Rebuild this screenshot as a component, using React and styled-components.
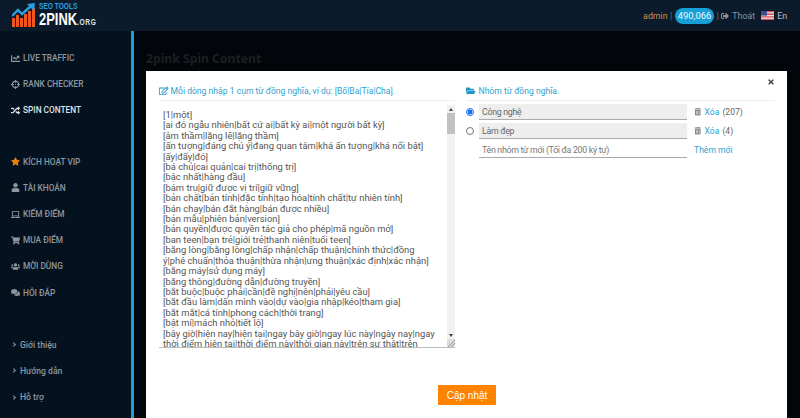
import React from 'react'
import styled, { createGlobalStyle } from 'styled-components'
import {
  FaChartLine, FaCrosshairs, FaRandom, FaStar, FaUser, FaLaptop, FaShoppingCart,
  FaUsers, FaComments, FaAngleRight, FaSignOutAlt, FaTrashAlt, FaFolderOpen, FaRegEdit, FaTimes
} from 'react-icons/fa'

const GlobalStyle = createGlobalStyle`
  html, body { margin: 0; padding: 0; height: 100%; overflow: hidden; background: #02050a; }
  body { font-family: Roboto, "Noto Sans", sans-serif; }
`;
const Page = styled.div`
  display: flex;
  flex-direction: column;
  height: 100vh;
`;
const Header = styled.header`
  flex: 0 0 31px;
  display: flex;
  align-items: center;
  justify-content: space-between;
  padding: 0 13px 0 12px;
  background: #0b1b2c;
`;
const Logo = styled.div`
  display: flex;
  align-items: center;
  gap: 3px;
`;
const LogoText = styled.div`
  display: flex;
  flex-direction: column;
  padding-top: 1px;
  font-family: "Liberation Sans", sans-serif;
  font-weight: 700;
`;
const LogoTop = styled.span`
  color: #2aa0e0;
  font-size: 9.7px;
  line-height: 10px;
  white-space: nowrap;
  transform: scaleX(0.68);
  transform-origin: left;
`;
const LogoBottom = styled.span`
  color: #fff;
  font-size: 16.6px;
  line-height: 17px;
  white-space: nowrap;
  transform: scaleX(0.78);
  transform-origin: left;
  small { font-size: 8.5px; letter-spacing: 0.8px; color: #dfe5ea; }
`;
const UserBar = styled.div`
  display: flex;
  align-items: center;
  font-size: 8.8px;
  color: #8d959c;
`;
const UserName = styled.span`
  color: #c8914a;
`;
const Sep = styled.span`
  margin: 0 2.5px;
  color: #707880;
`;
const Balance = styled.span`
  background: #17a0d8;
  color: #eaf7fc;
  border-radius: 8px;
  padding: 0 3px;
  height: 16px;
  line-height: 16px;
  font-size: 9.4px;
`;
const LogoutIcon = styled(FaSignOutAlt)`
  font-size: 8px;
  margin: 0 3px 0 0;
`;
const Flag = styled.svg`
  width: 13px;
  height: 9px;
  margin: 0 3px 0 6px;
`;
const Lang = styled.span`
  color: #b9c0c6;
`;
const Body = styled.div`
  flex: 1;
  display: flex;
  min-height: 0;
`;
const Sidebar = styled.nav`
  flex: 0 0 131px;
  background: #04121f;
  border-right: 3px solid #17a0d8;
  display: flex;
  flex-direction: column;
  padding-top: 14px;
  box-sizing: content-box;
`;
const NavGroup = styled.div`
  display: flex;
  flex-direction: column;
  margin-top: ${(props) => props.top || 0}px;
`;
const NavItem = styled.div`
  height: 26.2px;
  display: flex;
  align-items: center;
  gap: 3px;
  padding-left: 11px;
  font-size: 8.3px;
  font-weight: 500;
  color: ${(props) => props.active ? '#dfe3e6' : '#8f979e'};
  svg { font-size: 9px; color: ${(props) => props.iconColor || 'inherit'}; flex: none; }
`;
const SubItem = styled(NavItem)`
  gap: 2px;
  font-size: 8.6px;
  svg { font-size: 7px; }
`;
const Main = styled.main`
  flex: 1;
  min-width: 0;
  display: flex;
  flex-direction: column;
  padding: 19px 13px 0 12px;
`;
const Title = styled.h1`
  margin: 0;
  height: 21px;
  line-height: 18px;
  font-family: "Noto Sans", sans-serif;
  font-size: 12.2px;
  font-weight: 700;
  color: #1d1f20;
`;
const Modal = styled.section`
  flex: 1;
  background: #fff;
  display: flex;
  flex-direction: column;
  padding: 10px 12px 0 13px;
  position: relative;
`;
const CloseBtn = styled(FaTimes)`
  position: absolute;
  top: 7px;
  right: 12px;
  font-size: 8px;
  color: #444;
`;
const Columns = styled.div`
  display: flex;
  gap: 11px;
`;
const LeftCol = styled.div`
  flex: 0 0 296px;
`;
const RightCol = styled.div`
  flex: 1;
`;
const ColHead = styled.div`
  height: 19px;
  display: flex;
  align-items: center;
  gap: ${(props) => props.gap || 2}px;
  border-bottom: 1px solid #eee;
  font-size: 8.6px;
  color: #2f9fd0;
  svg { font-size: 9.5px; color: #1c93c8; }
`;
const SpinnerBox = styled.div`
  position: relative;
  margin-top: 4px;
  height: 243px;
`;
const Spinner = styled.textarea`
  display: block;
  width: 100%;
  height: 100%;
  padding: 5px 18px 0 4px;
  box-sizing: border-box;
  border: none;
  border-bottom: 1px solid #bbb;
  outline: none;
  resize: none;
  overflow: hidden;
  font-family: Roboto, "Noto Sans", sans-serif;
  font-size: 9.4px;
  line-height: 10.4px;
  color: #555;
`;
const ScrollTrack = styled.div`
  position: absolute;
  top: 0;
  right: 0;
  bottom: 1px;
  width: 8px;
  display: flex;
  flex-direction: column;
  align-items: center;
  background: #f1f1f1;
`;
const ScrollArrow = styled.div`
  flex: 0 0 8px;
  width: 8px;
  display: flex;
  align-items: center;
  justify-content: center;
  &::before {
    content: "";
    border-left: 2.5px solid transparent;
    border-right: 2.5px solid transparent;
    border-${(props) => props.down ? 'top' : 'bottom'}: 3px solid #444;
  }
`;
const ScrollThumb = styled.div`
  flex: 0 0 21px;
  width: 8px;
  background: #c1c1c1;
`;
const ScrollGap = styled.div`
  flex: 1;
`;
const ScrollCorner = styled.svg`
  flex: 0 0 8px;
  width: 8px;
  background: #dcdcdc;
`;
const Groups = styled.div`
  display: flex;
  flex-direction: column;
  gap: 4px;
  margin-top: 3px;
`;
const GroupRow = styled.div`
  display: grid;
  grid-template-columns: 13px 208px auto;
  align-items: center;
  height: 15px;
`;
const Radio = styled.input`
  width: 8px;
  height: 8px;
  margin: 0;
  accent-color: #1a6cf0;
`;
const GroupInput = styled.input`
  box-sizing: border-box;
  width: 100%;
  height: 16px;
  padding: 0 3px;
  border: none;
  border-bottom: 1px solid #aaa;
  outline: none;
  background: ${(props) => props.readOnly ? '#eee' : '#fff'};
  font-family: inherit;
  font-size: 8.8px;
  letter-spacing: -0.3px;
  color: #666;
  &::placeholder { color: #777; opacity: 1; }
`;
const GroupActions = styled.div`
  display: flex;
  align-items: center;
  gap: 3px;
  margin-left: 7px;
  font-size: 8.6px;
  color: #666;
  svg { font-size: 7.5px; color: #888; }
`;
const LinkText = styled.span`
  color: #2f9fd0;
`;
const Footer = styled.div`
  display: flex;
  justify-content: center;
  padding-top: 37px;
`;
const SaveBtn = styled.button`
  width: 58px;
  height: 20px;
  padding: 0;
  border: none;
  background: #ff8300;
  color: #fff;
  font-family: "Liberation Sans", sans-serif;
  font-size: 10px;
`;

const SYNONYMS = `[1|một]
[ai đó ngẫu nhiên|bất cứ ai|bất kỳ ai|một người bất kỳ]
[âm thầm|lặng lẽ|lặng thầm]
[ấn tượng|đáng chú ý|đang quan tâm|khá ấn tượng|khá nổi bật]
[ấy|đấy|đó]
[bá chủ|cai quản|cai trị|thống trị]
[bậc nhất|hàng đầu]
[bám trụ|giữ được vị trí|giữ vững]
[bản chất|bản tính|đặc tính|tạo hóa|tính chất|tự nhiên tính]
[bán chạy|bán đắt hàng|bán được nhiều]
[bản mẫu|phiên bản|version]
[bản quyền|được quyền tác giả cho phép|mã nguồn mở]
[ban teen|bạn trẻ|giới trẻ|thanh niên|tuổi teen]
[bằng lòng|bằng lòng|chấp nhận|chấp thuận|chính thức|đồng ý|phê chuẩn|thỏa thuận|thừa nhận|ưng thuận|xác định|xác nhận]
[bằng máy|sử dụng máy]
[băng thông|đường dẫn|đường truyền]
[bắt buộc|buộc phải|cần|đề nghị|nên|phải|yêu cầu]
[bắt đầu làm|dấn mình vào|dự vào|gia nhập|kéo|tham gia]
[bắt mắt|cá tính|phong cách|thời trang]
[bật mí|mách nhỏ|tiết lộ]
[bây giờ|hiện nay|hiện tại|ngay bây giờ|ngay lúc này|ngày nay|ngay thời điểm hiện tại|thời điểm này|thời gian này|trên sự thật|trên thực tế]`;

const mainNav = [
  { icon: <FaChartLine />, label: 'LIVE TRAFFIC' },
  { icon: <FaCrosshairs />, label: 'RANK CHECKER' },
  { icon: <FaRandom />, label: 'SPIN CONTENT', active: true },
];
const accountNav = [
  { icon: <FaStar />, label: 'KÍCH HOẠT VIP', iconColor: '#e5820f' },
  { icon: <FaUser />, label: 'TÀI KHOẢN' },
  { icon: <FaLaptop />, label: 'KIẾM ĐIỂM' },
  { icon: <FaShoppingCart />, label: 'MUA ĐIỂM' },
  { icon: <FaUsers />, label: 'MỜI DÙNG' },
  { icon: <FaComments />, label: 'HỎI ĐÁP' },
];
const helpNav = ['Giới thiệu', 'Hướng dẫn', 'Hỗ trợ'];

const LogoMark = () => (
  <svg width="24" height="25" viewBox="0 0 24 25">
    <rect x="0" y="15" width="3" height="9" fill="#f0561e" />
    <rect x="4" y="12" width="3" height="12" fill="#f0561e" />
    <rect x="8" y="15" width="3" height="9" fill="#f0561e" />
    <rect x="12" y="11" width="3" height="13" fill="#f0561e" />
    <rect x="16" y="8" width="3" height="16" fill="#f0561e" />
    <rect x="20" y="5" width="3" height="19" fill="#f0561e" />
    <path d="M0 13 L6 7 L10 11 L19 3" fill="none" stroke="#2a9fe0" strokeWidth="2.4" />
    <path d="M15 1 L23 0 L22 8 Z" fill="#2a9fe0" />
  </svg>
);

const UsFlag = () => (
  <Flag viewBox="0 0 13 9">
    <rect width="13" height="9" fill="#e9dfe3" />
    <path d="M0 0h13v1.3H0zM0 2.6h13v1.3H0zM0 5.2h13v1.3H0zM0 7.8h13V9H0z" fill="#d5525d" />
    <rect width="6" height="4.6" fill="#3d4b8c" />
  </Flag>
);

function App() {
  return (
    <Page>
      <GlobalStyle />
      <Header>
        <Logo>
          <LogoMark />
          <LogoText>
            <LogoTop>SEO TOOLS</LogoTop>
            <LogoBottom>2PINK<small>.ORG</small></LogoBottom>
          </LogoText>
        </Logo>
        <UserBar>
          <UserName>admin</UserName>
          <Sep>|</Sep>
          <Balance>490,066</Balance>
          <Sep>|</Sep>
          <LogoutIcon />
          Thoát
          <UsFlag />
          <Lang>En</Lang>
        </UserBar>
      </Header>
      <Body>
        <Sidebar>
          <NavGroup>
            {mainNav.map((item) => (
              <NavItem key={item.label} active={item.active}>{item.icon}{item.label}</NavItem>
            ))}
          </NavGroup>
          <NavGroup top={25}>
            {accountNav.map((item) => (
              <NavItem key={item.label} iconColor={item.iconColor}>{item.icon}{item.label}</NavItem>
            ))}
          </NavGroup>
          <NavGroup top={26}>
            {helpNav.map((label) => (
              <SubItem key={label}><FaAngleRight />{label}</SubItem>
            ))}
          </NavGroup>
        </Sidebar>
        <Main>
          <Title>2pink Spin Content</Title>
          <Modal>
            <CloseBtn />
            <Columns>
              <LeftCol>
                <ColHead><FaRegEdit />Mỗi dòng nhập 1 cụm từ đồng nghĩa, ví dụ: [Bố|Ba|Tía|Cha].</ColHead>
                <SpinnerBox>
                  <Spinner defaultValue={SYNONYMS} spellCheck={false} />
                  <ScrollTrack>
                    <ScrollArrow />
                    <ScrollThumb />
                    <ScrollGap />
                    <ScrollArrow down />
                    <ScrollCorner viewBox="0 0 8 8" height="8">
                      <path d="M1 8 L8 1 M4 8 L8 4" stroke="#888" strokeWidth="0.8" />
                    </ScrollCorner>
                  </ScrollTrack>
                </SpinnerBox>
              </LeftCol>
              <RightCol>
                <ColHead gap={3}><FaFolderOpen />Nhóm từ đồng nghĩa.</ColHead>
                <Groups>
                  <GroupRow>
                    <Radio type="radio" name="group" defaultChecked />
                    <GroupInput readOnly value="Công nghệ" />
                    <GroupActions><FaTrashAlt /><LinkText>Xóa</LinkText>(207)</GroupActions>
                  </GroupRow>
                  <GroupRow>
                    <Radio type="radio" name="group" />
                    <GroupInput readOnly value="Làm đẹp" />
                    <GroupActions><FaTrashAlt /><LinkText>Xóa</LinkText>(4)</GroupActions>
                  </GroupRow>
                  <GroupRow>
                    <span />
                    <GroupInput placeholder="Tên nhóm từ mới (Tối đa 200 ký tự)" />
                    <GroupActions><LinkText>Thêm mới</LinkText></GroupActions>
                  </GroupRow>
                </Groups>
              </RightCol>
            </Columns>
            <Footer>
              <SaveBtn>Cập nhật</SaveBtn>
            </Footer>
          </Modal>
        </Main>
      </Body>
    </Page>
  )
}

export default App
